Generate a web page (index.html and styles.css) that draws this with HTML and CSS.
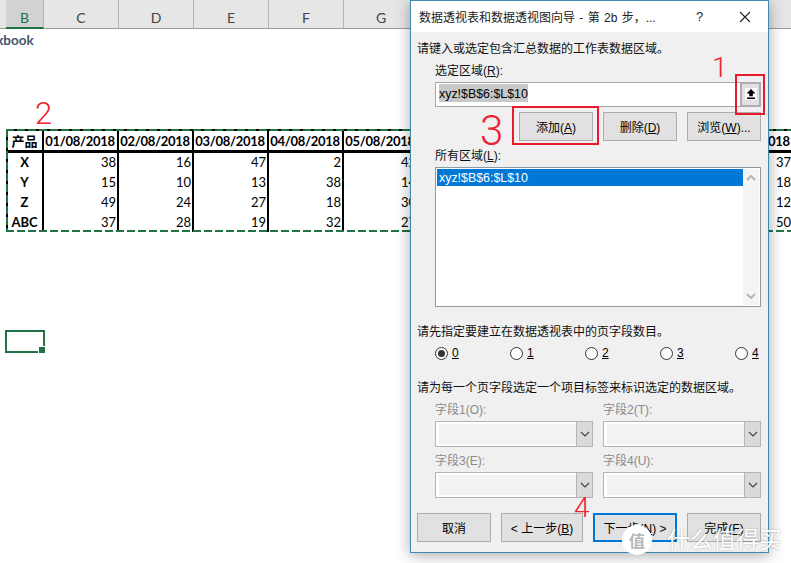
FILE: index.html
```html
<!DOCTYPE html>
<html lang="zh-CN">
<head>
  <meta charset="UTF-8" />
  <title>数据透视表和数据透视图向导</title>
  <link rel="stylesheet" href="styles.css">
</head>
<body>

  <!-- Worksheet behind the dialog -->
  <div class="sheet">
    <div class="col-heads">
      <div class="col-head col-first">B</div>
      <div class="col-head">C</div>
      <div class="col-head">D</div>
      <div class="col-head">E</div>
      <div class="col-head">F</div>
      <div class="col-head">G</div>
    </div>
    <div class="book-title">Workbook</div>

    <div class="range">
      <table class="data">
        <tr>
          <th class="name">产品</th>
          <th>01/08/2018</th><th>02/08/2018</th><th>03/08/2018</th><th>04/08/2018</th><th>05/08/2018</th>
          <th></th><th></th><th></th><th></th><th>10/08/2018</th>
        </tr>
        <tr>
          <th class="name">X</th>
          <td>38</td><td>16</td><td>47</td><td>2</td><td>42</td><td></td><td></td><td></td><td></td><td>37</td>
        </tr>
        <tr>
          <th class="name">Y</th>
          <td>15</td><td>10</td><td>13</td><td>38</td><td>14</td><td></td><td></td><td></td><td></td><td>18</td>
        </tr>
        <tr>
          <th class="name">Z</th>
          <td>49</td><td>24</td><td>27</td><td>18</td><td>30</td><td></td><td></td><td></td><td></td><td>12</td>
        </tr>
        <tr>
          <th class="name">ABC</th>
          <td>37</td><td>28</td><td>19</td><td>32</td><td>27</td><td></td><td></td><td></td><td></td><td>50</td>
        </tr>
      </table>
    </div>

    <div class="active-cell"></div>
  </div>

  <!-- Wizard dialog -->
  <div class="dialog">
    <div class="titlebar">
      <span class="title">数据透视表和数据透视图向导 - 第 2b 步，...</span>
      <span class="help">?</span>
      <svg class="close" width="12" height="12" viewBox="0 0 12 12">
        <path d="M1 1 L11 11 M11 1 L1 11" stroke="#222" stroke-width="1.1" fill="none" />
      </svg>
    </div>

    <div class="body">
      <div class="line">请键入或选定包含汇总数据的工作表数据区域。</div>
      <div class="line indent gap-label">选定区域(<u>R</u>):</div>

      <div class="range-input indent">
        <span class="range-text"><span class="selected">xyz!$B$6:$L$10</span></span>
        <span class="pick-btn">
          <span class="pick-icon">
            <svg width="10" height="10" viewBox="0 0 10 10">
              <path d="M5 0 L9.5 4.5 H6.8 V7.2 H3.2 V4.5 H0.5 Z M1 8.4 H9 V10 H1 Z" fill="#000" />
            </svg>
          </span>
        </span>
      </div>

      <div class="range-btns">
        <button class="btn btn-range">添加(<u>A</u>)</button>
        <button class="btn btn-range">删除(<u>D</u>)</button>
        <button class="btn btn-range">浏览(<u>W</u>)...</button>
      </div>

      <div class="line indent gap-label">所有区域(<u>L</u>):</div>

      <div class="list indent">
        <div class="list-items">
          <div class="list-item">xyz!$B$6:$L$10</div>
        </div>
        <div class="scroll">
          <svg width="10" height="6" viewBox="0 0 10 6"><path d="M1 5 L5 1 L9 5" class="chev-soft" /></svg>
          <svg width="10" height="6" viewBox="0 0 10 6"><path d="M1 1 L5 5 L9 1" class="chev-soft" /></svg>
        </div>
      </div>

      <div class="line gap-section">请先指定要建立在数据透视表中的页字段数目。</div>

      <div class="radios">
        <label class="radio"><span class="dot on"></span><u>0</u></label>
        <label class="radio"><span class="dot"></span><u>1</u></label>
        <label class="radio"><span class="dot"></span><u>2</u></label>
        <label class="radio"><span class="dot"></span><u>3</u></label>
        <label class="radio"><span class="dot"></span><u>4</u></label>
      </div>

      <div class="line gap-note">请为每一个页字段选定一个项目标签来标识选定的数据区域。</div>

      <div class="fields">
        <div class="field">
          <div class="line off">字段1(O):</div>
          <div class="combo"><span class="combo-face"></span><span class="combo-btn"><svg width="10" height="6" viewBox="0 0 10 6"><path d="M1 1 L5 5 L9 1" class="chev" /></svg></span></div>
        </div>
        <div class="field">
          <div class="line off">字段2(T):</div>
          <div class="combo"><span class="combo-face"></span><span class="combo-btn"><svg width="10" height="6" viewBox="0 0 10 6"><path d="M1 1 L5 5 L9 1" class="chev" /></svg></span></div>
        </div>
        <div class="field">
          <div class="line off">字段3(E):</div>
          <div class="combo"><span class="combo-face"></span><span class="combo-btn"><svg width="10" height="6" viewBox="0 0 10 6"><path d="M1 1 L5 5 L9 1" class="chev" /></svg></span></div>
        </div>
        <div class="field">
          <div class="line off">字段4(U):</div>
          <div class="combo"><span class="combo-face"></span><span class="combo-btn"><svg width="10" height="6" viewBox="0 0 10 6"><path d="M1 1 L5 5 L9 1" class="chev" /></svg></span></div>
        </div>
      </div>

      <div class="actions">
        <button class="btn btn-cancel">取消</button>
        <button class="btn btn-back">&lt; 上一步(<u>B</u>)</button>
        <button class="btn btn-next">下一步(<u>N</u>) &gt;</button>
        <button class="btn btn-cancel">完成(<u>F</u>)</button>
      </div>
    </div>
  </div>

  <!-- Red markup drawn over the screenshot -->
  <div class="mark-box mark-box-pick"></div>
  <div class="mark-box mark-box-add"></div>
  <span class="mark mark-1">1</span>
  <span class="mark mark-2">2</span>
  <span class="mark mark-3">3</span>
  <span class="mark mark-4">4</span>

  <!-- Site watermark -->
  <div class="watermark">
    <span class="wm-logo">值</span>
    <span class="wm-text">什么值得买</span>
  </div>

</body>
</html>
```

FILE: styles.css
```css
:root {
  --face: #f0f0f0;
  --btn: #e1e1e1;
  --btn-line: #adadad;
  --blue: #0078d7;
  --mark: #ee2233;
  --sheet-green: #217346;
  --cjk: "Liberation Sans", "Noto Sans CJK SC", sans-serif;
}

* {
  box-sizing: border-box;
}

body {
  margin: 0;
  width: 791px;
  height: 563px;
  overflow: hidden;
  position: relative;
  background: #fff;
  font-family: var(--cjk);
  font-size: 12px;
  color: #000;
}

u {
  text-underline-offset: 1px;
}

/* Worksheet */
.sheet {
  width: 791px;
}

.col-heads {
  display: flex;
  height: 29px;
  padding-left: 6px;
  background: #e6e6e6;
  border-bottom: 1px solid #9c9c9c;
}

.col-head {
  width: 75px;
  padding-top: 8px;
  text-align: center;
  font-family: "Lato", sans-serif;
  font-size: 14px;
  line-height: 20px;
  color: #444;
  border-right: 1px solid #b4b4b4;
}

.col-first {
  width: 38px;
  background: #d2d2d2;
  color: #217346;
  border-bottom: 2px solid var(--sheet-green);
  margin-bottom: -1px;
}

.book-title {
  margin: 1px 0 0 -30px;
  height: 20px;
  font-family: "Lato", sans-serif;
  font-weight: 700;
  font-size: 13.5px;
  line-height: 20px;
  color: #44546a;
}

.range {
  position: relative;
  width: 786px;
  margin: 79px 0 0 6px;
}

/* marching ants around the copied range */
.range::after {
  content: "";
  position: absolute;
  inset: 0;
  background:
    repeating-linear-gradient(90deg, var(--sheet-green) 0 8px, transparent 8px 11px) top / 100% 2px no-repeat,
    repeating-linear-gradient(90deg, var(--sheet-green) 0 8px, transparent 8px 11px) bottom / 100% 2px no-repeat,
    repeating-linear-gradient(180deg, var(--sheet-green) 0 8px, transparent 8px 11px) left / 2px 100% no-repeat;
}

.data {
  border-collapse: collapse;
  table-layout: fixed;
  width: 786px;
  border: 2px solid #000;
  border-bottom: 0;
  font-family: "Lato", sans-serif;
  font-size: 13px;
}

.data th,
.data td {
  width: 75px;
  height: 20px;
  padding: 0 1px 0 0;
  line-height: 18px;
  border-right: 2px solid #000;
  text-align: right;
}

.data th {
  text-align: center;
  font-weight: 700;
  letter-spacing: -0.3px;
}

.data tr:first-child th {
  border-bottom: 3px solid #000;
  height: 21px;
  padding-top: 1px;
}

.data .name {
  width: 36px;
  text-align: center;
  letter-spacing: 0;
  font-family: "Lato", "Noto Sans CJK SC", sans-serif;
}

.active-cell {
  position: relative;
  width: 40px;
  height: 23px;
  margin: 98px 0 0 5px;
  border: 2px solid var(--sheet-green);
}

.active-cell::after {
  content: "";
  position: absolute;
  right: -3px;
  bottom: -3px;
  width: 6px;
  height: 6px;
  background: var(--sheet-green);
  border: 1px solid #fff;
}

/* Dialog */
.dialog {
  position: absolute;
  left: 410px;
  top: 0;
  width: 359px;
  height: 553px;
  background: var(--face);
  border: 1px solid #3d8cb0;
  box-shadow: 0 2px 14px rgba(0, 0, 0, 0.35);
}

.titlebar {
  display: flex;
  align-items: center;
  height: 31px;
  padding-left: 8px;
  background: #fff;
  color: #222;
}

.title {
  width: 272px;
  white-space: nowrap;
  font-size: 12px;
  word-spacing: 1px;
}

.help {
  width: 48px;
  padding-left: 5px;
  font-size: 13px;
}

.close {
  display: block;
}

.body {
  padding: 8px 7px 10px 6px;
}

.line {
  height: 16px;
  line-height: 18px;
  white-space: nowrap;
  color: #111;
}

.indent {
  margin-left: 18px;
}

.gap-label {
  margin-top: 6px;
}

.gap-section {
  margin-top: 16px;
}

.gap-note {
  margin-top: 18px;
}

.off {
  color: #8a8a8a;
}

.range-input {
  display: flex;
  height: 25px;
  margin-top: 4px;
  background: #fff;
  border: 1px solid #a6a6a6;
}

.range-text {
  flex: 1;
  padding-left: 3px;
  font-size: 12.4px;
  line-height: 22px;
}

.selected {
  display: inline-block;
  height: 18px;
  line-height: 20px;
  background: #c8c8c8;
}

.pick-btn {
  display: flex;
  align-items: center;
  justify-content: center;
  width: 21px;
  margin: -1px;
  padding-bottom: 2px;
  background: var(--btn);
  border: 2px solid var(--btn-line);
}

.pick-icon {
  display: flex;
  align-items: center;
  justify-content: center;
  width: 12px;
  height: 12px;
  background: #fff;
}

.range-btns {
  display: flex;
  justify-content: flex-end;
  gap: 10px;
  margin-top: 5px;
}

.btn {
  display: block;
  height: 29px;
  padding: 0;
  background: var(--btn);
  border: 1px solid var(--btn-line);
  font-family: var(--cjk);
  font-size: 12px;
  color: #000;
}

.btn-range,
.btn-cancel {
  width: 74px;
}

.list {
  display: flex;
  height: 140px;
  margin-top: 4px;
  padding: 1px;
  background: #fff;
  border: 1px solid #8e9aa3;
}

.list-items {
  flex: 1;
}

.list-item {
  height: 17px;
  padding-left: 2px;
  background: var(--blue);
  color: #fff;
  font-size: 12.4px;
  line-height: 19px;
}

.scroll {
  display: flex;
  flex-direction: column;
  justify-content: space-between;
  align-items: center;
  width: 16px;
  padding: 6px 0;
  background: #f4f4f4;
}

.chev-soft {
  fill: none;
  stroke: #b5b5b5;
  stroke-width: 2;
}

.chev {
  fill: none;
  stroke: #444;
  stroke-width: 1.2;
}

.radios {
  display: grid;
  grid-template-columns: repeat(5, 75px);
  margin: 6px 0 0 18px;
  height: 16px;
}

.radio {
  display: flex;
  align-items: center;
  gap: 4px;
  font-size: 12px;
  line-height: 16px;
  white-space: nowrap;
}

.dot {
  position: relative;
  width: 13px;
  height: 13px;
  background: #fff;
  border: 1px solid #333;
  border-radius: 50%;
}

.dot.on::after {
  content: "";
  position: absolute;
  left: 2px;
  top: 2px;
  width: 7px;
  height: 7px;
  background: #333;
  border-radius: 50%;
}

.fields {
  display: grid;
  grid-template-columns: 158px 158px;
  column-gap: 10px;
  row-gap: 5px;
  margin: 6px 0 0 18px;
}

.field {
  display: flex;
  flex-direction: column;
  gap: 4px;
}

.combo {
  display: flex;
  height: 26px;
  background: #fff;
  border: 1px solid #b4b4b4;
}

.combo-face {
  flex: 1;
  margin: 2px 0 2px 3px;
  background: #f2f2f2;
}

.combo-btn {
  display: flex;
  align-items: center;
  justify-content: center;
  width: 17px;
  margin: -1px;
  background: #dadada;
  border: 1px solid #b4b4b4;
}

.actions {
  display: flex;
  gap: 10px;
  margin-top: 15px;
}

.btn-back {
  width: 82px;
}

.btn-next {
  width: 84px;
  border: 2px solid var(--blue);
}

/* Red markup */
.mark-box {
  position: absolute;
  border: 2px solid #e8192c;
}

.mark-box-pick {
  left: 735px;
  top: 74px;
  width: 30px;
  height: 41px;
}

.mark-box-add {
  left: 512px;
  top: 106px;
  width: 87px;
  height: 39px;
}

.mark {
  position: absolute;
  font-family: "Roboto", sans-serif;
  font-weight: 300;
  color: var(--mark);
  line-height: 1;
}

.mark-1 {
  left: 712px;
  top: 54px;
  font-size: 28px;
}

.mark-2 {
  left: 35px;
  top: 98px;
  font-size: 31px;
}

.mark-3 {
  left: 480px;
  top: 110px;
  font-size: 42px;
}

.mark-4 {
  left: 574px;
  top: 494px;
  font-size: 28px;
}

/* Watermark */
.watermark {
  position: absolute;
  left: 622px;
  top: 525px;
  display: flex;
  align-items: center;
  gap: 15px;
  color: #fff;
}

.wm-logo {
  display: flex;
  align-items: center;
  justify-content: center;
  width: 30px;
  height: 30px;
  background: #fff;
  color: #b5b5b5;
  border-radius: 50%;
  font-size: 16px;
  font-weight: 700;
}

.wm-text {
  font-size: 23px;
  line-height: 26px;
  white-space: nowrap;
  text-shadow: 0 0 2px rgba(0, 0, 0, 0.3);
}
```
